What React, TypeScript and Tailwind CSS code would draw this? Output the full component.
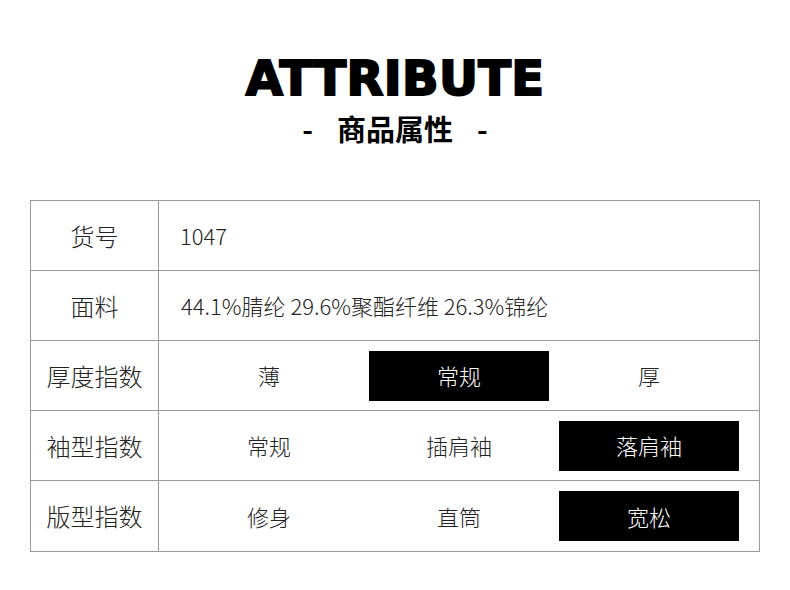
import React from "react";

const cjk = { fontFamily: '"Noto Sans CJK SC", "Noto Sans", sans-serif' };

function Option({ label, active }: { label: string; active?: boolean }) {
  return (
    <div
      className={
        "w-[180px] h-[50px] flex items-center justify-center text-[22px] font-light " +
        (active ? "bg-black text-white" : "text-[#222]")
      }
    >
      {label}
    </div>
  );
}

function Row({ label, children, last }: { label: string; children: React.ReactNode; last?: boolean }) {
  return (
    <div className={"flex h-[70px] " + (last ? "" : "border-b border-[#9a9a9a]")}>
      <div className="w-[128px] shrink-0 border-r border-[#9a9a9a] flex items-center justify-center text-[24px] font-light text-[#222]">
        {label}
      </div>
      <div className="flex-1 flex items-center">{children}</div>
    </div>
  );
}

export default function App() {
  return (
    <div className="w-[790px] h-[590px] bg-white" style={cjk}>
      <div className="pt-[49px] flex flex-col items-center">
        <div
          className="text-[48px] leading-[58px] font-bold text-black tracking-[0.3px]"
          style={{ fontFamily: '"DejaVu Sans", sans-serif', WebkitTextStroke: "2px black" }}
        >
          ATTRIBUTE
        </div>
        <div className="mt-[1px] flex items-center text-[29px] leading-[40px] font-bold text-black">
          <span className="mr-[24px]">-</span>
          <span>商品属性</span>
          <span className="ml-[24px]">-</span>
        </div>
      </div>
      <div className="mt-[52px] ml-[30px] w-[730px] border border-[#9a9a9a]">
        <Row label="货号">
          <span className="pl-[21px] text-[22px] font-light text-[#222]">1047</span>
        </Row>
        <Row label="面料">
          <span className="pl-[22px] text-[22px] font-light text-[#222]">44.1%腈纶 29.6%聚酯纤维 26.3%锦纶</span>
        </Row>
        <Row label="厚度指数">
          <div className="flex gap-[10px] pl-[20px]">
            <Option label="薄" />
            <Option label="常规" active />
            <Option label="厚" />
          </div>
        </Row>
        <Row label="袖型指数">
          <div className="flex gap-[10px] pl-[20px]">
            <Option label="常规" />
            <Option label="插肩袖" />
            <Option label="落肩袖" active />
          </div>
        </Row>
        <Row label="版型指数" last>
          <div className="flex gap-[10px] pl-[20px]">
            <Option label="修身" />
            <Option label="直筒" />
            <Option label="宽松" active />
          </div>
        </Row>
      </div>
    </div>
  );
}
